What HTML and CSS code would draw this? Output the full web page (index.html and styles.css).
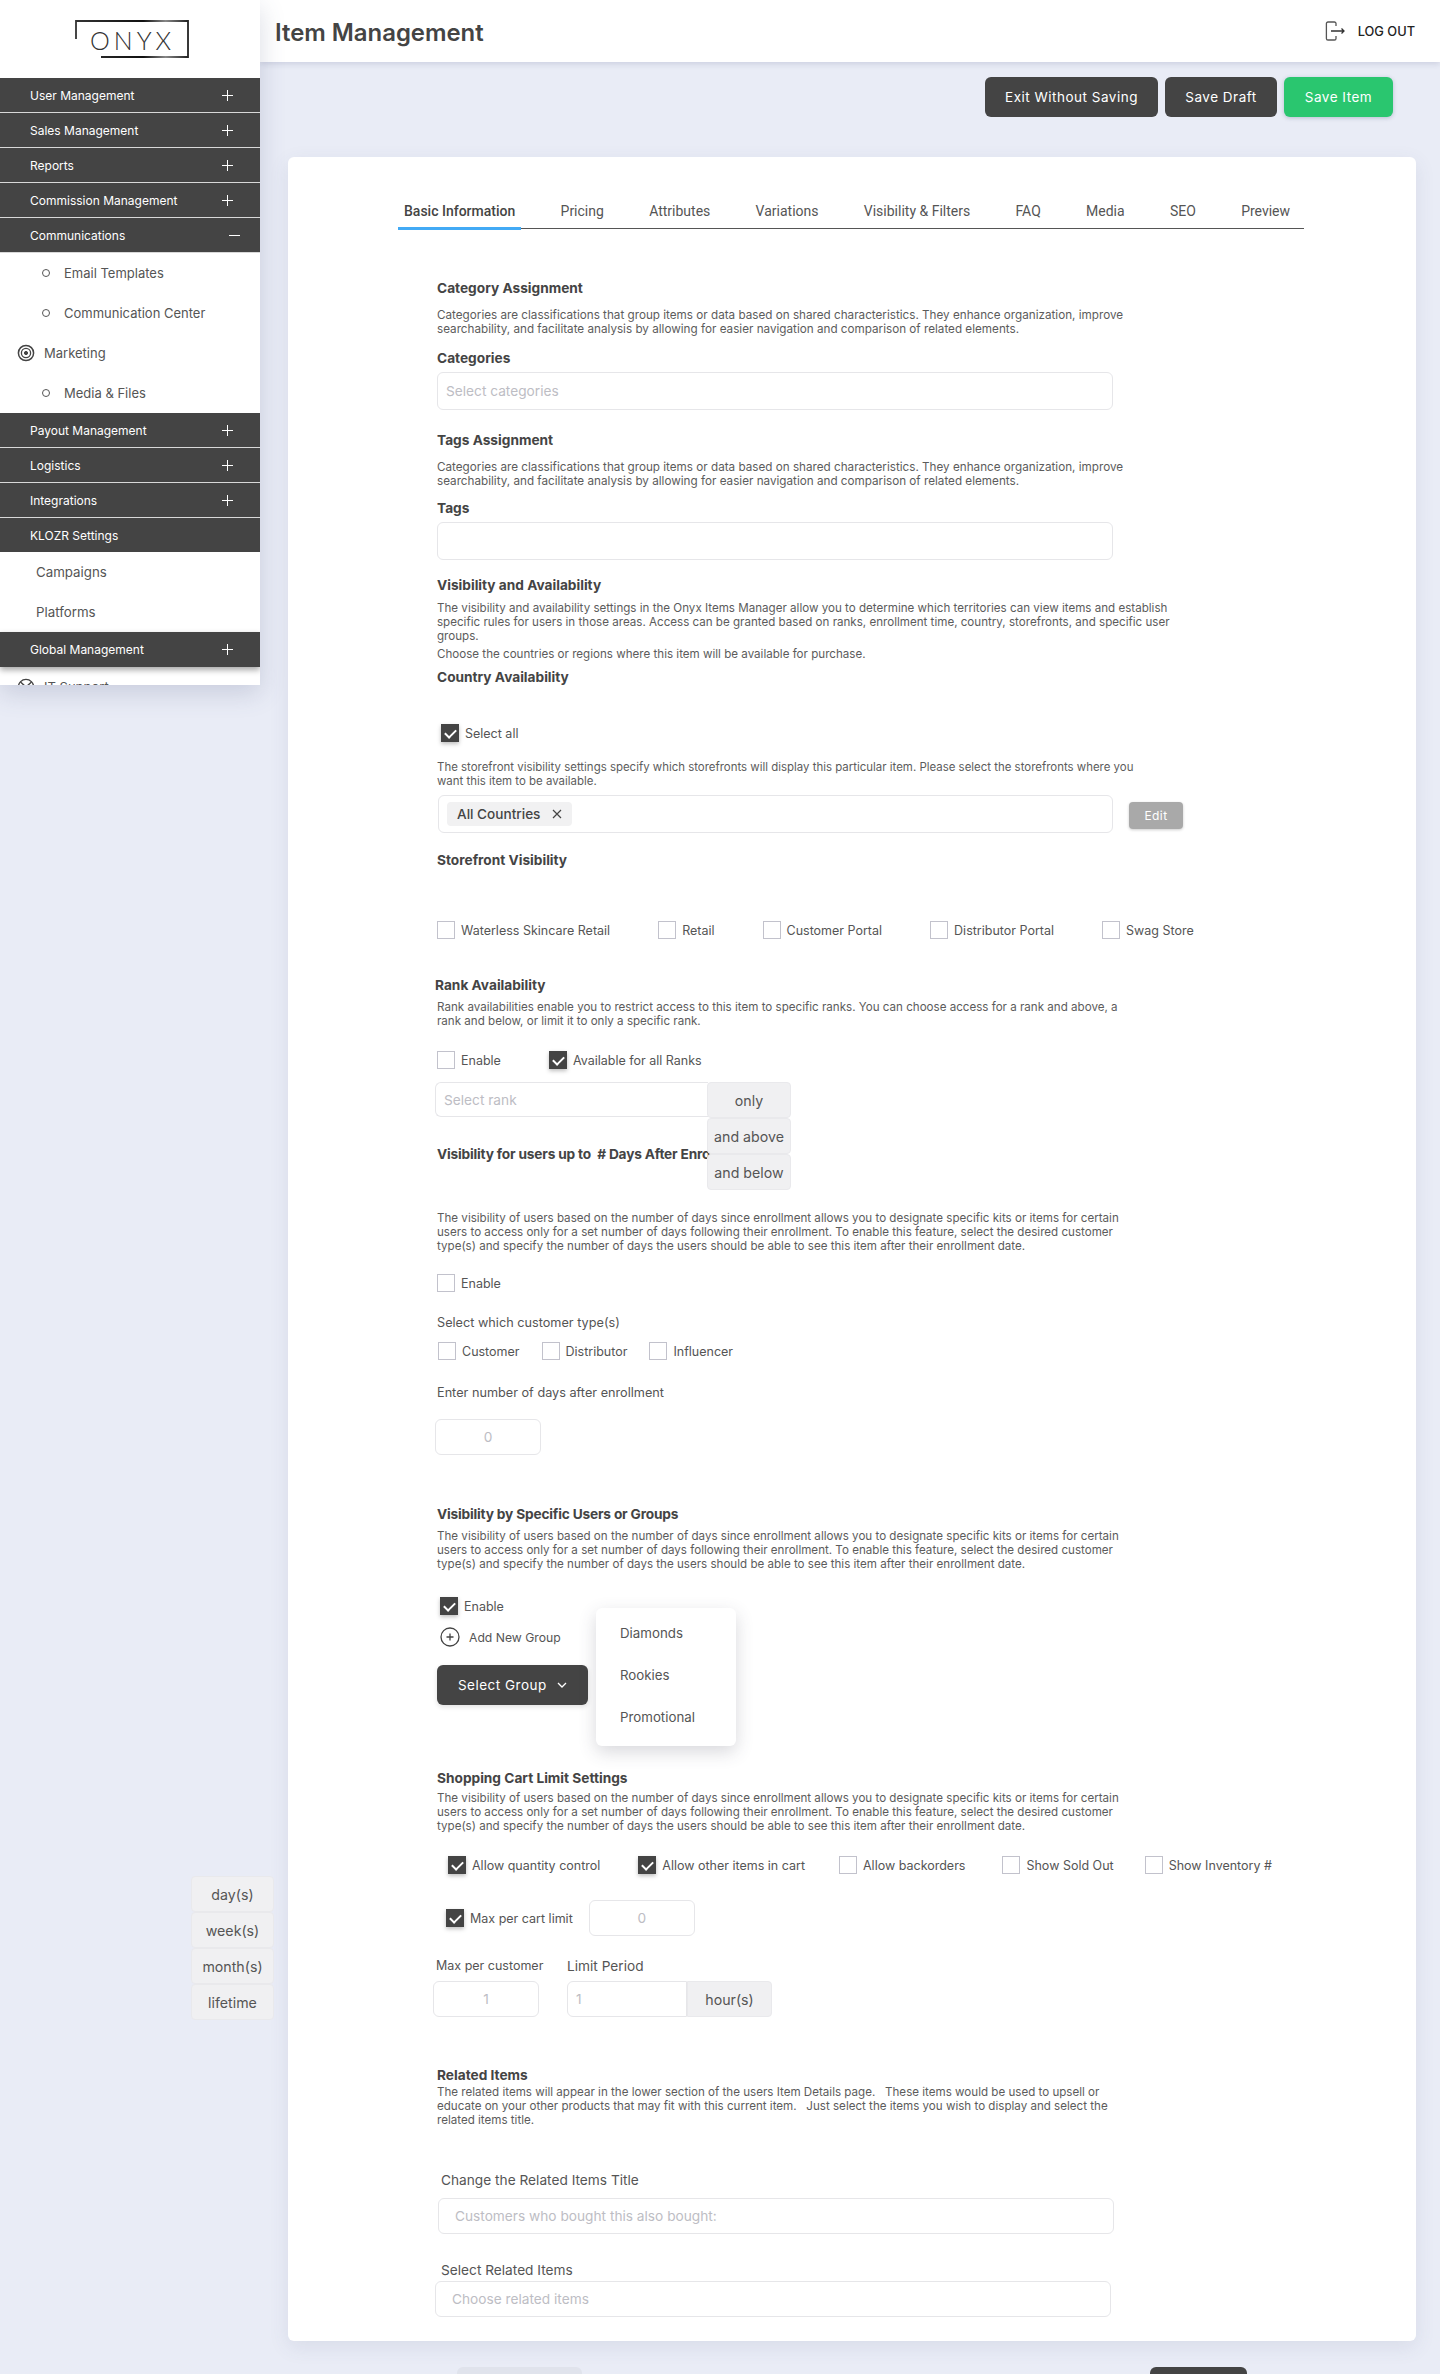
FILE: index.html
```html
<!DOCTYPE html>
<html lang="en">
<head>
  <meta charset="UTF-8" />
  <title>Item Management</title>
  <link rel="stylesheet" href="styles.css">
</head>
<body>
  <aside class="sidebar">
    <div class="logo">
      <svg class="logo-frame" width="114" height="38" viewBox="0 0 114 38">
        <defs>
          <linearGradient id="logoLine" x1="0" y1="0" x2="1" y2="0">
            <stop offset="0" stop-color="#333"/>
            <stop offset="0.6" stop-color="#111"/>
            <stop offset="0.8" stop-color="#888"/>
            <stop offset="1" stop-color="#222"/>
          </linearGradient>
        </defs>
        <path d="M1 19V1H113V37H26" fill="none" stroke="url(#logoLine)" stroke-width="1.800"/>
      </svg>
      <span class="logo-text">ONYX</span>
    </div>
    <nav>
      <div class="nav-item"><span>User Management</span><i class="plus"></i></div>
      <div class="nav-item"><span>Sales Management</span><i class="plus"></i></div>
      <div class="nav-item"><span>Reports</span><i class="plus"></i></div>
      <div class="nav-item"><span>Commission Management</span><i class="plus"></i></div>
      <div class="nav-item"><span>Communications</span><i class="minus"></i></div>
      <div class="sub-item"><i class="ring"></i>Email Templates</div>
      <div class="sub-item"><i class="ring"></i>Communication Center</div>
      <div class="sub-item icon-item">
        <svg width="18" height="18" viewBox="0 0 18 18" fill="none" stroke="#444"><circle cx="9" cy="9" r="7.6" stroke-width="1.5"/><circle cx="9" cy="9" r="4.6" stroke-width="1.3"/><circle cx="9" cy="9" r="1.6" fill="#444"/></svg>
        Marketing
      </div>
      <div class="sub-item"><i class="ring"></i>Media &amp; Files</div>
      <div class="nav-item"><span>Payout Management</span><i class="plus"></i></div>
      <div class="nav-item"><span>Logistics</span><i class="plus"></i></div>
      <div class="nav-item"><span>Integrations</span><i class="plus"></i></div>
      <div class="nav-item no-line"><span>KLOZR Settings</span></div>
      <div class="sub-item plain">Campaigns</div>
      <div class="sub-item plain">Platforms</div>
      <div class="nav-item no-line raised"><span>Global Management</span><i class="plus"></i></div>
      <div class="sub-item icon-item">
        <svg width="18" height="18" viewBox="0 0 18 18" fill="none" stroke="#444" stroke-width="1.4"><circle cx="9" cy="9" r="7.6"/><path d="M3.5 4 9 9l5.5-5M3.5 14 9 9l5.5 5"/></svg>
        IT Support
      </div>
    </nav>
  </aside>

  <div class="main">
    <header class="topbar">
      <h1>Item Management</h1>
      <div class="logout">
        <svg width="20" height="20" viewBox="0 0 20 20" fill="none" stroke="#555" stroke-width="1.3"><path d="M11 5V2.6A1.6 1.6 0 0 0 9.400 1H3a1.600 1.600 0 0 0-1.600 1.600v14.800A1.600 1.600 0 0 0 3 19h6.400a1.600 1.600 0 0 0 1.600-1.600V15"/><path d="M6 10h13M16.500 7.500 19 10l-2.500 2.500" stroke="#333"/></svg>
        <span>LOG OUT</span>
      </div>
    </header>

    <div class="actions">
      <button class="btn btn-dark btn-exit">Exit Without Saving</button>
      <button class="btn btn-dark btn-draft">Save Draft</button>
      <button class="btn btn-green">Save Item</button>
    </div>

    <section class="card">
      <div class="tabs">
        <a class="tab active">Basic Information</a>
        <a class="tab">Pricing</a>
        <a class="tab">Attributes</a>
        <a class="tab">Variations</a>
        <a class="tab">Visibility &amp; Filters</a>
        <a class="tab">FAQ</a>
        <a class="tab">Media</a>
        <a class="tab">SEO</a>
        <a class="tab">Preview</a>
      </div>

      <div class="form">
        <h3 class="mt-50">Category Assignment</h3>
        <p class="p-wide mt-11">Categories are classifications that group items or data based on shared characteristics. They enhance organization, improve<br>searchability, and facilitate analysis by allowing for easier navigation and comparison of related elements.</p>
        <h3 class="mt-13">Categories</h3>
        <div class="field mt-5"><span class="ph">Select categories</span></div>

        <h3 class="mt-21">Tags Assignment</h3>
        <p class="p-wide mt-11">Categories are classifications that group items or data based on shared characteristics. They enhance organization, improve<br>searchability, and facilitate analysis by allowing for easier navigation and comparison of related elements.</p>
        <h3 class="mt-11">Tags</h3>
        <div class="field mt-5"></div>

        <h3 class="mt-16">Visibility and Availability</h3>
        <p class="mt-7">The visibility and availability settings in the Onyx Items Manager allow you to determine which territories can view items and establish<br>specific rules for users in those areas. Access can be granted based on ranks, enrollment time, country, storefronts, and specific user<br>groups.</p>
        <p class="mt-4">Choose the countries or regions where this item will be available for purchase.</p>
        <h3 class="mt-7">Country Availability</h3>
        <div class="checks mt-38 in-4">
          <label class="check"><i class="cb on"></i>Select all</label>
        </div>
        <p class="p-narrow mt-18">The storefront visibility settings specify which storefronts will display this particular item. Please select the storefronts where you<br>want this item to be available.</p>
        <div class="country-row mt-7">
          <div class="field country-field">
            <span class="chip">All Countries
              <svg width="10" height="10" viewBox="0 0 10 10" stroke="#444" stroke-width="1.200"><path d="m1 1 8 8M9 1 1 9"/></svg>
            </span>
          </div>
          <button class="btn-edit">Edit</button>
        </div>
        <h3 class="mt-18">Storefront Visibility</h3>
        <div class="checks wide mt-52">
          <label class="check"><i class="cb"></i>Waterless Skincare Retail</label>
          <label class="check"><i class="cb"></i>Retail</label>
          <label class="check"><i class="cb"></i>Customer Portal</label>
          <label class="check"><i class="cb"></i>Distributor Portal</label>
          <label class="check"><i class="cb"></i>Swag Store</label>
        </div>

        <h3 class="mt-37 out-2">Rank Availability</h3>
        <p class="mt-6">Rank availabilities enable you to restrict access to this item to specific ranks. You can choose access for a rank and above, a<br>rank and below, or limit it to only a specific rank.</p>
        <div class="checks wide mt-23">
          <label class="check"><i class="cb"></i>Enable</label>
          <label class="check"><i class="cb on"></i>Available for all Ranks</label>
        </div>
        <div class="rank-row mt-13">
          <div class="field rank-field"><span class="ph">Select rank</span></div>
          <div class="rank-options">
            <span class="addon">only</span>
            <span class="addon">and above</span>
            <span class="addon">and below</span>
          </div>
        </div>

        <h3 class="tight mt-28">Visibility for users up to&nbsp; # Days After Enrollment</h3>
        <p class="mt-48">The visibility of users based on the number of days since enrollment allows you to designate specific kits or items for certain<br>users to access only for a set number of days following their enrollment. To enable this feature, select the desired customer<br>type(s) and specify the number of days the users should be able to see this item after their enrollment date.</p>
        <div class="checks mt-21">
          <label class="check"><i class="cb"></i>Enable</label>
        </div>
        <div class="label mt-22">Select which customer type(s)</div>
        <div class="checks narrow mt-10">
          <label class="check"><i class="cb"></i>Customer</label>
          <label class="check"><i class="cb"></i>Distributor</label>
          <label class="check"><i class="cb"></i>Influencer</label>
        </div>
        <div class="label mt-24">Enter number of days after enrollment</div>
        <div class="field small center out-2 mt-17"><span class="ph">0</span></div>

        <h3 class="tight mt-50">Visibility by Specific Users or Groups</h3>
        <p class="mt-6">The visibility of users based on the number of days since enrollment allows you to designate specific kits or items for certain<br>users to access only for a set number of days following their enrollment. To enable this feature, select the desired customer<br>type(s) and specify the number of days the users should be able to see this item after their enrollment date.</p>
        <div class="checks mt-26 in-3">
          <label class="check"><i class="cb on"></i>Enable</label>
        </div>
        <div class="add-group mt-12">
          <svg width="20" height="20" viewBox="0 0 20 20" fill="none" stroke="#444" stroke-width="1.300"><circle cx="10" cy="10" r="9"/><path d="M10 6.500v7M6.500 10h7"/></svg>
          Add New Group
        </div>
        <div class="group-row mt-18">
          <button class="btn btn-dark btn-group">Select Group
            <svg width="10" height="6" viewBox="0 0 10 6" fill="none" stroke="#fff" stroke-width="1.300"><path d="m1 1 4 4 4-4"/></svg>
          </button>
          <ul class="group-menu">
            <li>Diamonds</li>
            <li>Rookies</li>
            <li>Promotional</li>
          </ul>
        </div>

        <h3 class="mt-64">Shopping Cart Limit Settings</h3>
        <p class="mt-4">The visibility of users based on the number of days since enrollment allows you to designate specific kits or items for certain<br>users to access only for a set number of days following their enrollment. To enable this feature, select the desired customer<br>type(s) and specify the number of days the users should be able to see this item after their enrollment date.</p>
        <div class="checks cart mt-23">
          <label class="check"><i class="cb on"></i>Allow quantity control</label>
          <label class="check"><i class="cb on"></i>Allow other items in cart</label>
          <label class="check"><i class="cb"></i>Allow backorders</label>
          <label class="check"><i class="cb"></i>Show Sold Out</label>
          <label class="check"><i class="cb"></i>Show Inventory #</label>
        </div>
        <div class="max-row mt-26">
          <label class="check"><i class="cb on"></i>Max per cart limit</label>
          <div class="field small center"><span class="ph">0</span></div>
        </div>
        <div class="limit-row mt-21">
          <div class="limit-col limit-col-first">
            <div class="label limit-label">Max per customer</div>
            <div class="field small center mt-6"><span class="ph">1</span></div>
          </div>
          <div class="limit-col">
            <div class="label big">Limit Period</div>
            <div class="period mt-6">
              <div class="field period-field"><span class="ph">1</span></div>
              <span class="addon period-unit">hour(s)</span>
            </div>
          </div>
        </div>

        <h3 class="mt-49">Related Items</h3>
        <p class="mt-1">The related items will appear in the lower section of the users Item Details page.&nbsp;&nbsp; These items would be used to upsell or<br>educate on your other products that may fit with this current item.&nbsp;&nbsp; Just select the items you wish to display and select the<br>related items title.</p>
        <div class="label big in-4 mt-44">Change the Related Items Title</div>
        <div class="field tall in-1 mt-9"><span class="ph">Customers who bought this also bought:</span></div>
        <div class="label big in-4 mt-27">Select Related Items</div>
        <div class="field tall out-2 mt-2"><span class="ph">Choose related items</span></div>
      </div>
    </section>

    <div class="page-foot">
      <span class="stub stub-light"></span>
      <span class="stub stub-dark"></span>
    </div>
  </div>

  <!-- unit list of the limit period, opened outside the card -->
  <div class="unit-menu">
    <span class="addon">day(s)</span>
    <span class="addon">week(s)</span>
    <span class="addon">month(s)</span>
    <span class="addon">lifetime</span>
  </div>
</body>
</html>
```

FILE: styles.css
```css
* {
  box-sizing: border-box;
}

body {
  margin: 0;
  height: 2374px;
  overflow: hidden;
  position: relative;
  display: flex;
  align-items: flex-start;
  background-color: #e9ecf6;
  color: #444;
  font-family: Inter, "Open Sans", sans-serif;
}

/* Sidebar */
.sidebar {
  width: 260px;
  height: 685px;
  flex-shrink: 0;
  overflow: hidden;
  background-color: #fff;
  box-shadow: 0 8px 24px rgba(70, 80, 120, 0.2);
  position: relative;
  z-index: 2;
}

.logo {
  width: 114px;
  height: 38px;
  margin: 20px 0 20px 75px;
  position: relative;
}

.logo-frame {
  position: absolute;
  top: 0;
  left: 0;
}

.logo-text {
  position: absolute;
  top: 5px;
  left: 15px;
  font-family: Lato, sans-serif;
  font-weight: 300;
  font-size: 25px;
  line-height: 30px;
  letter-spacing: 4px;
  color: #333;
}

.nav-item {
  height: 35px;
  padding: 0 27px 0 30px;
  display: flex;
  align-items: center;
  justify-content: space-between;
  background-color: #444;
  border-bottom: 1px solid #d8d8d8;
  color: #fff;
  font-size: 12px;
}

.nav-item.no-line {
  border-bottom: none;
  height: 34px;
}

.nav-item.raised {
  height: 35px;
  box-shadow: 0 3px 6px rgba(0, 0, 0, 0.35);
  position: relative;
}

.plus,
.minus {
  width: 11px;
  height: 11px;
  position: relative;
  display: block;
}

.plus::before,
.minus::before {
  content: "";
  position: absolute;
  left: 0;
  right: 0;
  top: 5px;
  height: 1.4px;
  background-color: #fff;
}

.plus::after {
  content: "";
  position: absolute;
  top: 0;
  bottom: 0;
  left: 5px;
  width: 1.4px;
  background-color: #fff;
}

.minus {
  margin-right: -7px;
}

.sub-item {
  height: 40px;
  padding: 0 0 1px 42px;
  display: flex;
  align-items: center;
  font-size: 13px;
  color: #555;
}

.sub-item .ring {
  width: 8px;
  height: 8px;
  margin-right: 14px;
  border: 1.5px solid #555;
  border-radius: 50%;
}

.sub-item.icon-item {
  padding-left: 17px;
}

.sub-item.icon-item svg {
  margin-right: 9px;
}

.sub-item.plain {
  padding-left: 36px;
  font-size: 13.3px;
}

/* Main column */
.main {
  flex: 1;
  min-width: 0;
}

.topbar {
  height: 62px;
  padding: 0 25px 0 15px;
  display: flex;
  align-items: center;
  justify-content: space-between;
  background-color: #fff;
  box-shadow: 0 2px 6px rgba(70, 80, 120, 0.18);
}

.topbar h1 {
  margin: 2px 0 0;
  font-size: 23.9px;
  font-weight: 600;
  color: #444;
}

.logout {
  display: flex;
  align-items: center;
  gap: 13px;
  font-size: 12.8px;
  font-weight: 500;
  color: #222;
}

.actions {
  margin-top: 15px;
  padding-right: 47px;
  display: flex;
  justify-content: flex-end;
  gap: 7px;
}

.btn {
  height: 40px;
  border: none;
  border-radius: 6px;
  color: #fff;
  font-family: inherit;
  font-size: 13.5px;
  letter-spacing: 0.5px;
  cursor: pointer;
}

.btn-dark {
  background-color: #444;
}

.btn-green {
  width: 109px;
  background-color: #2ac66f;
  box-shadow: 0 1px 4px rgba(70, 80, 120, 0.3);
}

.btn-exit {
  width: 173px;
}

.btn-draft {
  width: 112px;
}

/* Card */
.card {
  margin: 40px 24px 0 28px;
  padding: 45px 0 24px 149px;
  background-color: #fff;
  border-radius: 6px;
  box-shadow: 0 6px 20px rgba(70, 80, 120, 0.1);
}

.tabs {
  width: 906px;
  margin-left: -39px;
  height: 27px;
  display: flex;
  gap: 33.3px;
  border-bottom: 1px solid #555;
  font-family: Roboto, sans-serif;
  font-size: 14px;
  line-height: 18px;
  color: #555;
}

.tab {
  padding: 0 6px;
  position: relative;
  white-space: nowrap;
}

.tab.active {
  font-weight: 500;
  color: #444;
}

.tab.active::after {
  content: "";
  position: absolute;
  left: 0;
  right: 0;
  bottom: -2px;
  height: 3px;
  background-color: #42aaf5;
}

/* Form */
h3 {
  margin: 0;
  font-size: 13.7px;
  line-height: 18px;
  font-weight: 700;
  color: #444;
  white-space: nowrap;
}

h3.tight {
  letter-spacing: -0.18px;
}

p {
  margin: 0;
  font-size: 11.6px;
  line-height: 14px;
  color: #5c5c5c;
  white-space: nowrap;
}

p.p-wide {
  font-size: 11.7px;
}

p.p-narrow {
  font-size: 11.45px;
}

.label {
  font-size: 12.7px;
  line-height: 18px;
  color: #555;
}

.label.big {
  font-size: 13.7px;
}

.limit-label {
  padding-left: 3px;
  font-size: 12.5px;
  white-space: nowrap;
}

.field {
  width: 676px;
  height: 38px;
  padding: 0 8px;
  display: flex;
  align-items: center;
  background-color: #fff;
  border: 1px solid #e6e6e9;
  border-radius: 6px;
}

.field.small {
  width: 106px;
  height: 36px;
}

.field.tall {
  height: 36px;
  padding: 0 16px;
}

.field.center {
  justify-content: center;
}

.ph {
  font-size: 13.7px;
  color: #bdbdc4;
}

.checks {
  display: flex;
}

.checks.wide {
  gap: 48px;
}

.checks.narrow {
  gap: 22px;
  padding-left: 1px;
}

.checks.cart {
  gap: 34px;
  padding-left: 11px;
}

.checks.cart .check:nth-child(1) {
  margin-right: 4px;
}

.checks.cart .check:nth-child(3) {
  margin-right: 3px;
}

.checks.cart .check:nth-child(4) {
  margin-right: -3px;
}

.check {
  display: flex;
  align-items: center;
  gap: 6px;
  height: 18px;
  font-size: 12.5px;
  color: #555;
  white-space: nowrap;
}

.cb {
  width: 18px;
  height: 18px;
  flex-shrink: 0;
  border: 1.5px solid #c2c2cc;
  background-color: #fff;
  position: relative;
}

.cb.on {
  border-color: #444;
  background-color: #444;
  box-shadow: 0 2px 4px rgba(0, 0, 0, 0.25);
}

.cb.on::after {
  content: "";
  position: absolute;
  left: 3px;
  top: 4px;
  width: 9px;
  height: 5px;
  border-left: 2px solid #fff;
  border-bottom: 2px solid #fff;
  transform: rotate(-45deg);
}

.country-row {
  display: flex;
  align-items: center;
  padding-left: 1px;
  gap: 16px;
}

.country-field {
  width: 675px;
}

.chip {
  width: 125px;
  height: 24px;
  padding: 0 10px;
  display: inline-flex;
  align-items: center;
  justify-content: space-between;
  background-color: #f1f1f2;
  border-radius: 4px;
  font-size: 13.6px;
  font-weight: 500;
  color: #444;
  white-space: nowrap;
}

.btn-edit {
  width: 54px;
  height: 27px;
  margin-top: 2px;
  border: none;
  border-radius: 4px;
  background-color: #a9a9a9;
  color: #fff;
  font-family: inherit;
  font-size: 12px;
  letter-spacing: 0.4px;
  box-shadow: 0 1px 3px rgba(0, 0, 0, 0.2);
}

.rank-row {
  height: 35px;
  margin-left: -2px;
  position: relative;
  z-index: 1;
}

.rank-field {
  width: 273px;
  height: 35px;
  border-radius: 6px 0 0 6px;
  border-right: none;
}

.rank-options {
  position: absolute;
  top: 0;
  left: 272px;
  width: 84px;
}

.addon {
  height: 36px;
  display: flex;
  align-items: center;
  justify-content: center;
  background-color: #f0f0f2;
  border: 1px solid #e9e9ec;
  border-radius: 4px;
  font-size: 14.2px;
  color: #555;
}

.add-group {
  height: 20px;
  padding-left: 3px;
  display: flex;
  align-items: center;
  gap: 9px;
  font-size: 12.2px;
  color: #555;
}

.group-row {
  height: 40px;
  position: relative;
}

.btn-group {
  width: 151px;
  box-shadow: 0 2px 5px rgba(0, 0, 0, 0.12);
}

.btn-group svg {
  margin-left: 6px;
  vertical-align: 2px;
}

.group-menu {
  position: absolute;
  top: -57px;
  left: 159px;
  width: 140px;
  height: 138px;
  margin: 0;
  padding: 4px 0 0;
  list-style: none;
  background-color: #fff;
  border-radius: 6px;
  box-shadow: 0 6px 18px rgba(60, 60, 80, 0.2);
  font-size: 13.3px;
  color: #555;
}

.group-menu li {
  height: 42px;
  padding-left: 24px;
  display: flex;
  align-items: center;
}

.max-row {
  display: flex;
  align-items: center;
  gap: 16px;
  padding-left: 9px;
}

.limit-row {
  display: flex;
  gap: 28px;
  margin-left: -4px;
}

.limit-col-first {
  width: 106px;
}

.period {
  display: flex;
}

.period-field {
  width: 120px;
  height: 36px;
  border-radius: 6px 0 0 6px;
  justify-content: flex-start;
}

.period-unit {
  width: 85px;
  border-radius: 0 4px 4px 0;
}

.unit-menu {
  position: absolute;
  top: 1876px;
  left: 191px;
  width: 83px;
  display: flex;
  flex-direction: column;
}

.page-foot {
  margin-top: 26px;
  height: 8px;
  padding-left: 197px;
  display: flex;
}

.stub {
  height: 30px;
  border-radius: 6px;
}

.stub-light {
  width: 125px;
  background-color: #e0e3ec;
}

.stub-dark {
  width: 97px;
  margin-left: 568px;
  background-color: #444;
}

/* Spacing helpers */
.mt-1 { margin-top: 1px; }
.mt-2 { margin-top: 2px; }
.mt-4 { margin-top: 4px; }
.mt-5 { margin-top: 5px; }
.mt-6 { margin-top: 6px; }
.mt-7 { margin-top: 7px; }
.mt-9 { margin-top: 9px; }
.mt-10 { margin-top: 10px; }
.mt-11 { margin-top: 11px; }
.mt-12 { margin-top: 12px; }
.mt-13 { margin-top: 13px; }
.mt-16 { margin-top: 16px; }
.mt-17 { margin-top: 17px; }
.mt-18 { margin-top: 18px; }
.mt-21 { margin-top: 21px; }
.mt-22 { margin-top: 22px; }
.mt-23 { margin-top: 23px; }
.mt-24 { margin-top: 24px; }
.mt-26 { margin-top: 26px; }
.mt-27 { margin-top: 27px; }
.mt-28 { margin-top: 28px; }
.mt-37 { margin-top: 37px; }
.mt-38 { margin-top: 38px; }
.mt-44 { margin-top: 44px; }
.mt-48 { margin-top: 48px; }
.mt-49 { margin-top: 49px; }
.mt-50 { margin-top: 50px; }
.mt-52 { margin-top: 52px; }
.mt-64 { margin-top: 64px; }

.in-1 { margin-left: 1px; }
.in-3 { margin-left: 3px; }
.in-4 { margin-left: 4px; }
.out-2 { margin-left: -2px; }
```
